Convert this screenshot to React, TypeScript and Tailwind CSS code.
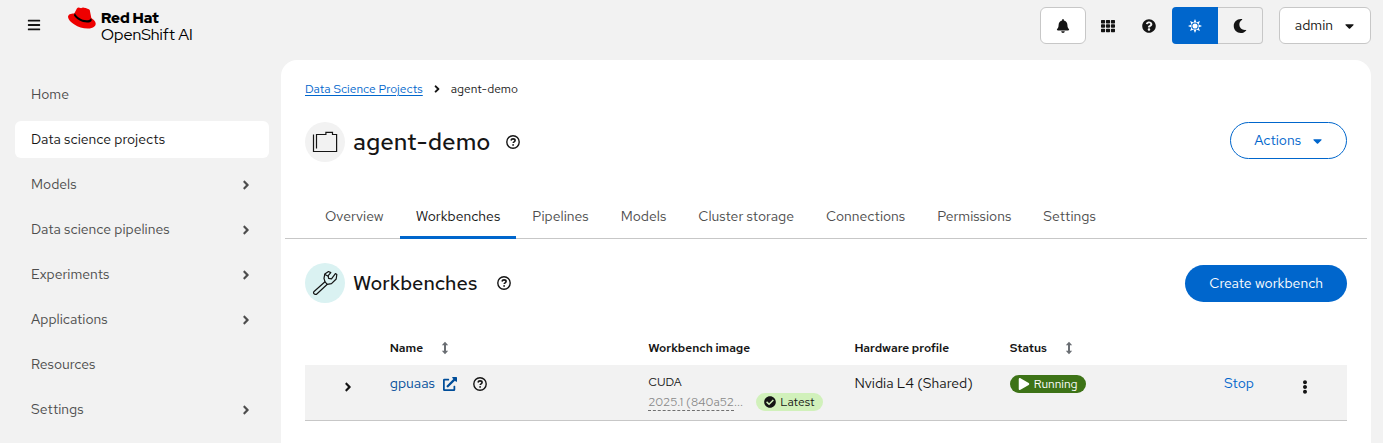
import React from "react";
import {
  FaAngleRight,
  FaBars,
  FaBell,
  FaCaretDown,
  FaCheckCircle,
  FaEllipsisV,
  FaExternalLinkAlt,
  FaMoon,
  FaPlay,
  FaQuestionCircle,
  FaTh,
} from "react-icons/fa";

const navItems = [
  { label: "Home" },
  { label: "Data science projects", active: true },
  { label: "Models", group: true },
  { label: "Data science pipelines", group: true },
  { label: "Experiments", group: true },
  { label: "Applications", group: true },
  { label: "Resources" },
  { label: "Settings", group: true },
];

const tabs = [
  "Overview",
  "Workbenches",
  "Pipelines",
  "Models",
  "Cluster storage",
  "Connections",
  "Permissions",
  "Settings",
];

function HelpIcon() {
  return (
    <svg viewBox="0 0 14 14" className="size-3.5" fill="none" stroke="currentColor" aria-hidden="true">
      <circle cx="7" cy="7" r="6.2" strokeWidth="1.4" />
      <path d="M5 5.500C5.200 4.400 6 3.900 7 3.900c1.200 0 2.100.6 2.100 1.600 0 1.300-1.900 1.300-1.900 2.500" strokeWidth="1.600" />
      <circle cx="7.100" cy="9.900" r=".9" fill="currentColor" stroke="none" />
    </svg>
  );
}

function SunIcon() {
  return (
    <svg viewBox="0 0 16 16" className="size-3.5" aria-hidden="true">
      <path
        fill="currentColor"
        fillRule="evenodd"
        d="M8 0l1.700 3.900 3.900-1.500-1.500 3.900L16 8l-3.900 1.700 1.500 3.900-3.900-1.500L8 16l-1.700-3.900-3.900 1.500 1.500-3.900L0 8l3.900-1.700-1.500-3.900 3.900 1.500zM8 3.900a4.100 4.100 0 100 8.200 4.100 4.100 0 000-8.200z"
      />
      <circle cx="8" cy="8" r="2.900" fill="currentColor" />
    </svg>
  );
}

function SortIcon() {
  return (
    <svg viewBox="0 0 8 14" className="h-3.5 w-2 text-[#6a6e73]" aria-hidden="true">
      <path fill="currentColor" d="M4 .8l3.200 3.400H5v5.600h2.200L4 13.200.8 9.800H3V4.200H.8z" />
    </svg>
  );
}

function HatLogo() {
  return (
    <svg viewBox="0 0 85 66" className="h-[22px] w-[28px]" aria-hidden="true">
      <path
        fill="#e00"
        d="M19 19C8 19 0 22 0 30c2 15 30 35 60 35 18 0 25-8 24-16-1-6-6-11-13-15L66 9C64 6 56 3 48 2c-4-2-6 2-10 1-4-2-8-3-11 1z"
      />
      <path fill="#000" d="M21 18l-3 7c6 12 24 22 40 22 9 0 15-4 14-9l-2-5c-1 5-7 7-14 7-14 0-31-10-35-22z" />
    </svg>
  );
}

function FolderIcon() {
  return (
    <svg viewBox="0 0 26 26" className="size-[26px]" fill="none" stroke="#151515" strokeWidth="1.200" aria-hidden="true">
      <path d="M1.500 5.500v17h23.100v-17h-4.100V3.400h-6.600v2.100H4.500v14" />
    </svg>
  );
}

function WrenchIcon() {
  return (
    <svg
      viewBox="0 0 26 26"
      className="size-[26px]"
      fill="none"
      stroke="#151515"
      strokeWidth="1.200"
      strokeLinejoin="round"
      strokeLinecap="round"
      aria-hidden="true"
    >
      <path d="M1.800 21.800L13 11.800 12 8.300l.8-4.300 3.700-2.500 2.300 1.100-2.600 3 .4 2.800 2.900.5 3.900-5.300 1.400 1-.6 4.400-4.700 4.700-4.200.6L4.800 24C3.600 25.200.6 23.600 1.800 21.800z" />
      <path d="M12.900 4.500l2.900 1.500M13 11.800l2.300 2.500" />
    </svg>
  );
}

function IconButton({ label, className, children }: { label: string; className?: string; children: React.ReactNode }) {
  return (
    <button type="button" aria-label={label} className={`flex items-center justify-center ${className ?? ""}`}>
      {children}
    </button>
  );
}

function Header() {
  return (
    <header className="flex h-[60px] items-start pt-[7px] pr-3 pl-[27px]">
      <IconButton label="Global navigation" className="mt-[11px] text-sm">
        <FaBars />
      </IconButton>
      <a href="#home" className="ml-[27px] flex text-black">
        <HatLogo />
        <span className="ml-[5px] flex flex-col pt-[3px] font-['Red_Hat_Display','Liberation_Sans',sans-serif]">
          <span className="text-[15px] leading-4 font-black">Red Hat</span>
          <span className="text-base leading-[18px]">OpenShift AI</span>
        </span>
      </a>
      <div className="ml-auto flex items-center">
        <IconButton label="Notifications" className="h-[37px] w-[46px] rounded-md border border-[#c7c7c7] bg-white text-sm">
          <FaBell />
        </IconButton>
        <IconButton label="Applications" className="w-11 text-sm">
          <FaTh />
        </IconButton>
        <IconButton label="Help" className="w-[38px] text-sm">
          <FaQuestionCircle />
        </IconButton>
        <div role="group" aria-label="Theme" className="ml-1 flex">
          <IconButton label="Light theme" className="h-[37px] w-[46px] rounded-l-[4px] bg-[#0066cc] text-white">
            <SunIcon />
          </IconButton>
          <IconButton label="Dark theme" className="h-[37px] w-[45px] rounded-r-[4px] border border-l-0 border-[#c7c7c7] text-sm">
            <FaMoon />
          </IconButton>
        </div>
        <button type="button" className="ml-4 flex h-[37px] items-center gap-3 rounded-md border border-[#c7c7c7] bg-white pr-4 pl-[15px]">
          admin <FaCaretDown viewBox="0 0 320 512" className="h-3.5 w-[9px]" />
        </button>
      </div>
    </header>
  );
}

function Sidebar() {
  return (
    <nav aria-label="Global" className="w-[281px] shrink-0 pt-4 pr-3 pl-[15px]">
      <ul className="flex flex-col gap-2">
        {navItems.map(({ label, active, group }) => (
          <li key={label}>
            <a
              href="#nav"
              aria-current={active ? "page" : undefined}
              className={`flex h-[37px] items-center justify-between rounded-md px-4 ${active ? "bg-white text-[#151515]" : "text-[#4d4d4d]"}`}
            >
              {label}
              {group && <FaAngleRight className="text-sm" />}
            </a>
          </li>
        ))}
      </ul>
    </nav>
  );
}

function WorkbenchTable() {
  return (
    <table className="mt-7 w-full table-fixed border-collapse text-left">
      <colgroup>
        <col className="w-[6.6%]" />
        <col className="w-[24.8%]" />
        <col className="w-[19.8%]" />
        <col className="w-[14.9%]" />
        <col />
        <col className="w-[7.1%]" />
        <col className="w-[4.7%]" />
      </colgroup>
      <thead>
        <tr className="h-[34px] text-xs">
          <td />
          <th className="pl-4 font-semibold">
            <button type="button" className="flex items-center gap-[18px]">Name <SortIcon /></button>
          </th>
          <th className="pl-4 font-semibold">Workbench image</th>
          <th className="pl-4 font-semibold">Hardware profile</th>
          <th className="pl-4 font-semibold">
            <button type="button" className="flex items-center gap-[18px]">Status <SortIcon /></button>
          </th>
          <td />
          <td />
        </tr>
      </thead>
      <tbody>
        <tr className="h-[55px] border-b border-[#c7c7c7] bg-[#f2f2f2] align-top">
          <td className="pt-[15px]">
            <IconButton label="Details" className="mr-[19px] ml-auto text-sm"><FaAngleRight /></IconButton>
          </td>
          <td className="pt-2 pl-4">
            <div className="flex items-center">
              <a href="#gpuaas" className="flex items-center gap-2 text-[#004d99]">gpuaas <FaExternalLinkAlt /></a>
              <IconButton label="More info" className="ml-4"><HelpIcon /></IconButton>
            </div>
          </td>
          <td className="pt-2 pl-4 text-xs leading-[18px]">
            <div>CUDA</div>
            <div className="mt-0.5 flex items-center gap-4 whitespace-nowrap">
              <button type="button" className="flex w-[92px] leading-4 text-[#8a8a8a]">
                <span className="border-b border-dashed border-[#707070]">2025.1 (840a52</span>...
              </button>
              <span className="flex h-[18px] items-center gap-1 rounded-full bg-[#d1f1bb] px-2"><FaCheckCircle />Latest</span>
            </div>
          </td>
          <td className="pt-2 pl-4 whitespace-nowrap">Nvidia L4 (Shared)</td>
          <td className="pt-[10px] pl-4">
            <span className="flex h-[18px] w-fit items-center gap-1 rounded-full bg-[#3d7317] px-2 text-xs text-white"><FaPlay />Running</span>
          </td>
          <td className="pt-2"><button type="button" className="text-[#0066cc]">Stop</button></td>
          <td className="pt-[15px]">
            <IconButton label="Kebab toggle" className="text-sm"><FaEllipsisV /></IconButton>
          </td>
        </tr>
      </tbody>
    </table>
  );
}

export default function App() {
  return (
    <div className="flex min-h-screen flex-col bg-[#f2f2f2] font-['Red_Hat_Text','Liberation_Sans',sans-serif] text-sm leading-[21px] text-[#151515]">
      <Header />
      <div className="flex grow">
        <Sidebar />
        <main className="mr-3 min-w-0 grow rounded-t-2xl bg-white pt-5">
          <div className="px-6">
            <nav aria-label="Breadcrumb" className="flex items-center text-xs leading-[18px]">
              <a href="#projects" className="text-[#0066cc] underline underline-offset-2">Data Science Projects</a>
              <FaAngleRight className="mx-2" />
              <span>agent-demo</span>
            </nav>
            <div className="mt-6 flex items-center">
              <span className="flex size-10 items-center justify-center rounded-full bg-[#f2f2f2]"><FolderIcon /></span>
              <h1 className="ml-2 text-2xl font-medium">agent-demo</h1>
              <IconButton label="Project info" className="ml-4"><HelpIcon /></IconButton>
              <button type="button" className="ml-auto flex h-[37px] items-center gap-3 self-start rounded-full border border-[#0066cc] pr-6 pl-[23px] text-[#0066cc]">
                Actions <FaCaretDown viewBox="0 0 320 512" className="h-3.5 w-[9px]" />
              </button>
            </div>
          </div>
          <div role="tablist" className="mx-1 mt-8 flex border-b border-[#c7c7c7] pl-6">
            {tabs.map((tab) => (
              <button
                key={tab}
                type="button"
                role="tab"
                aria-selected={tab === "Workbenches"}
                className={`-mb-px h-[45px] border-b-3 px-4 pt-0.5 ${tab === "Workbenches" ? "border-[#0066cc] text-[#151515]" : "border-transparent text-[#4d4d4d]"}`}
              >
                {tab}
              </button>
            ))}
          </div>
          <div className="px-6 pt-6">
            <div className="flex items-center">
              <span className="flex size-10 items-center justify-center rounded-full bg-[#daf2f2]"><WrenchIcon /></span>
              <h2 className="ml-2 text-xl font-medium">Workbenches</h2>
              <IconButton label="Workbench info" className="ml-5"><HelpIcon /></IconButton>
              <button type="button" className="ml-auto h-[37px] rounded-full bg-[#0066cc] px-6 text-white">Create workbench</button>
            </div>
            <WorkbenchTable />
          </div>
        </main>
      </div>
    </div>
  );
}
